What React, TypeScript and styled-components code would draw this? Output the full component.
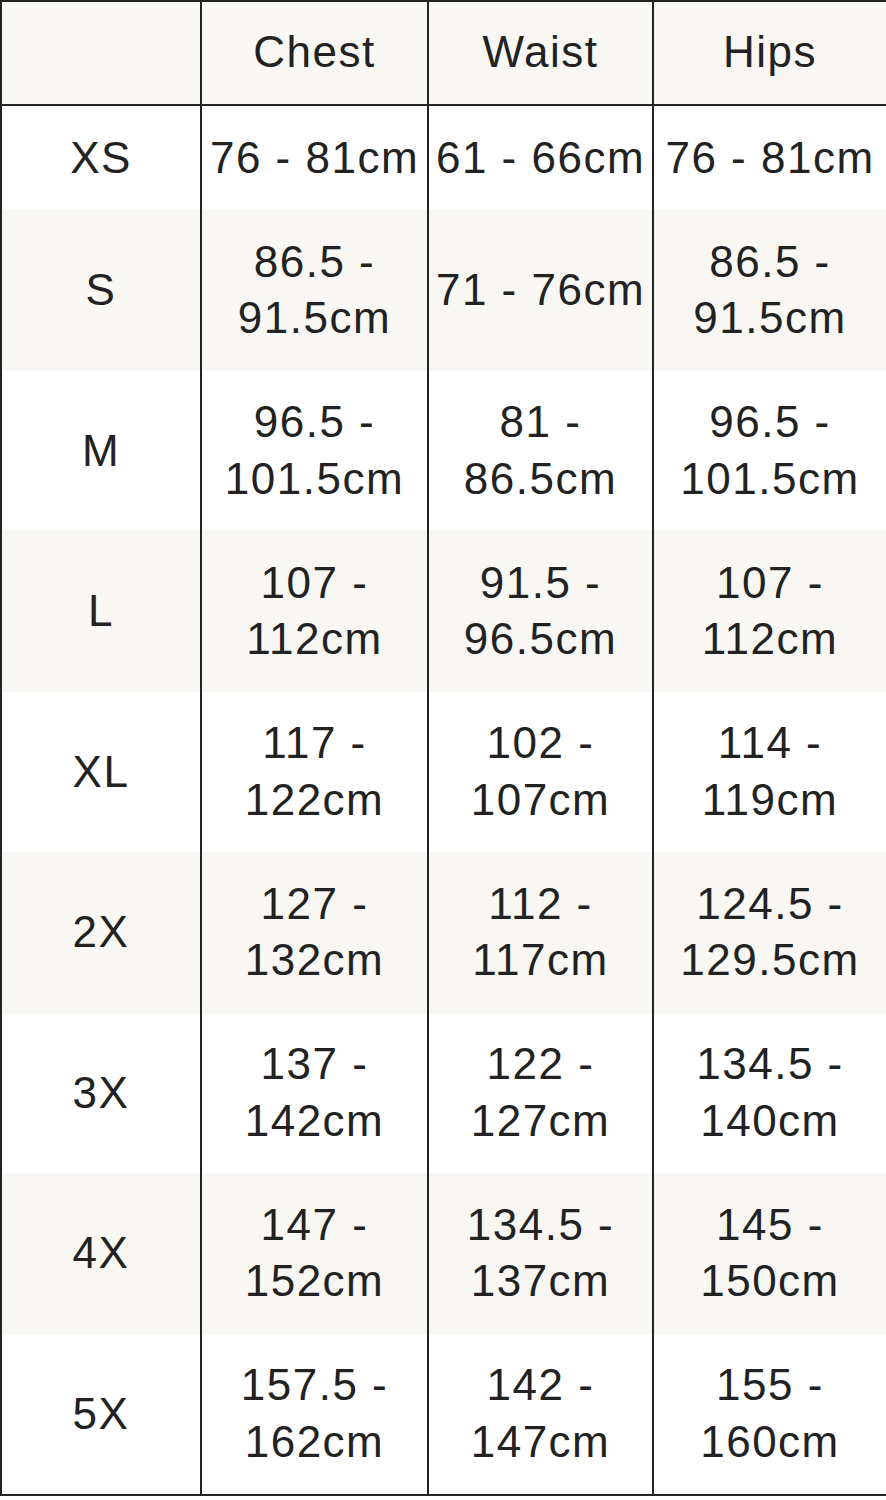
import React from "react";
import styled, { createGlobalStyle } from "styled-components";

const GlobalStyle = createGlobalStyle`
  html, body {
    margin: 0;
    padding: 0;
    background: #ffffff;
  }
  body {
    font-family: "Liberation Sans", Arial, Helvetica, sans-serif;
    color: #222222;
  }
  * { box-sizing: border-box; }
`;

const Chart = styled.div`
  display: grid;
  grid-template-columns: 200px 227px 225px 1fr;
  width: 886px;
  border-top: 2px solid #232323;
  border-left: 2px solid #232323;
  border-bottom: 2px solid #232323;
  font-family: "Liberation Sans", Arial, Helvetica, sans-serif;
  font-size: 44px;
  letter-spacing: 1.5px;
  color: #222222;
`;

const HeadCell = styled.div<{ $last?: boolean }>`
  height: 104px;
  display: flex;
  align-items: center;
  justify-content: center;
  background: #f8f7f3;
  border-bottom: 2px solid #232323;
  border-right: ${(p) => (p.$last ? "none" : "2px solid #232323")};
  line-height: 1;
  padding-bottom: 2px;
`;

const Cell = styled.div<{ $shade: boolean; $last?: boolean }>`
  display: flex;
  align-items: center;
  justify-content: center;
  text-align: center;
  padding: 23.75px 4px;
  line-height: 56.5px;
  background: ${(p) => (p.$shade ? "#f8f7f3" : "#ffffff")};
  border-right: ${(p) => (p.$last ? "none" : "2px solid #232323")};
`;

const rows: [string, string, string, string][] = [
  ["XS", "76 - 81cm", "61 - 66cm", "76 - 81cm"],
  ["S", "86.5 - 91.5cm", "71 - 76cm", "86.5 - 91.5cm"],
  ["M", "96.5 - 101.5cm", "81 - 86.5cm", "96.5 - 101.5cm"],
  ["L", "107 - 112cm", "91.5 - 96.5cm", "107 - 112cm"],
  ["XL", "117 - 122cm", "102 - 107cm", "114 - 119cm"],
  ["2X", "127 - 132cm", "112 - 117cm", "124.5 - 129.5cm"],
  ["3X", "137 - 142cm", "122 - 127cm", "134.5 - 140cm"],
  ["4X", "147 - 152cm", "134.5 - 137cm", "145 - 150cm"],
  ["5X", "157.5 - 162cm", "142 - 147cm", "155 - 160cm"],
];

const headers = ["", "Chest", "Waist", "Hips"];

export default function App() {
  return (
    <>
      <GlobalStyle />
      <Chart>
        {headers.map((h, i) => (
          <HeadCell key={`h${i}`} $last={i === headers.length - 1}>
            {h}
          </HeadCell>
        ))}
        {rows.map((row, r) =>
          row.map((v, c) => (
            <Cell key={`${r}-${c}`} $shade={r % 2 === 1} $last={c === row.length - 1}>
              {v}
            </Cell>
          ))
        )}
      </Chart>
    </>
  );
}
